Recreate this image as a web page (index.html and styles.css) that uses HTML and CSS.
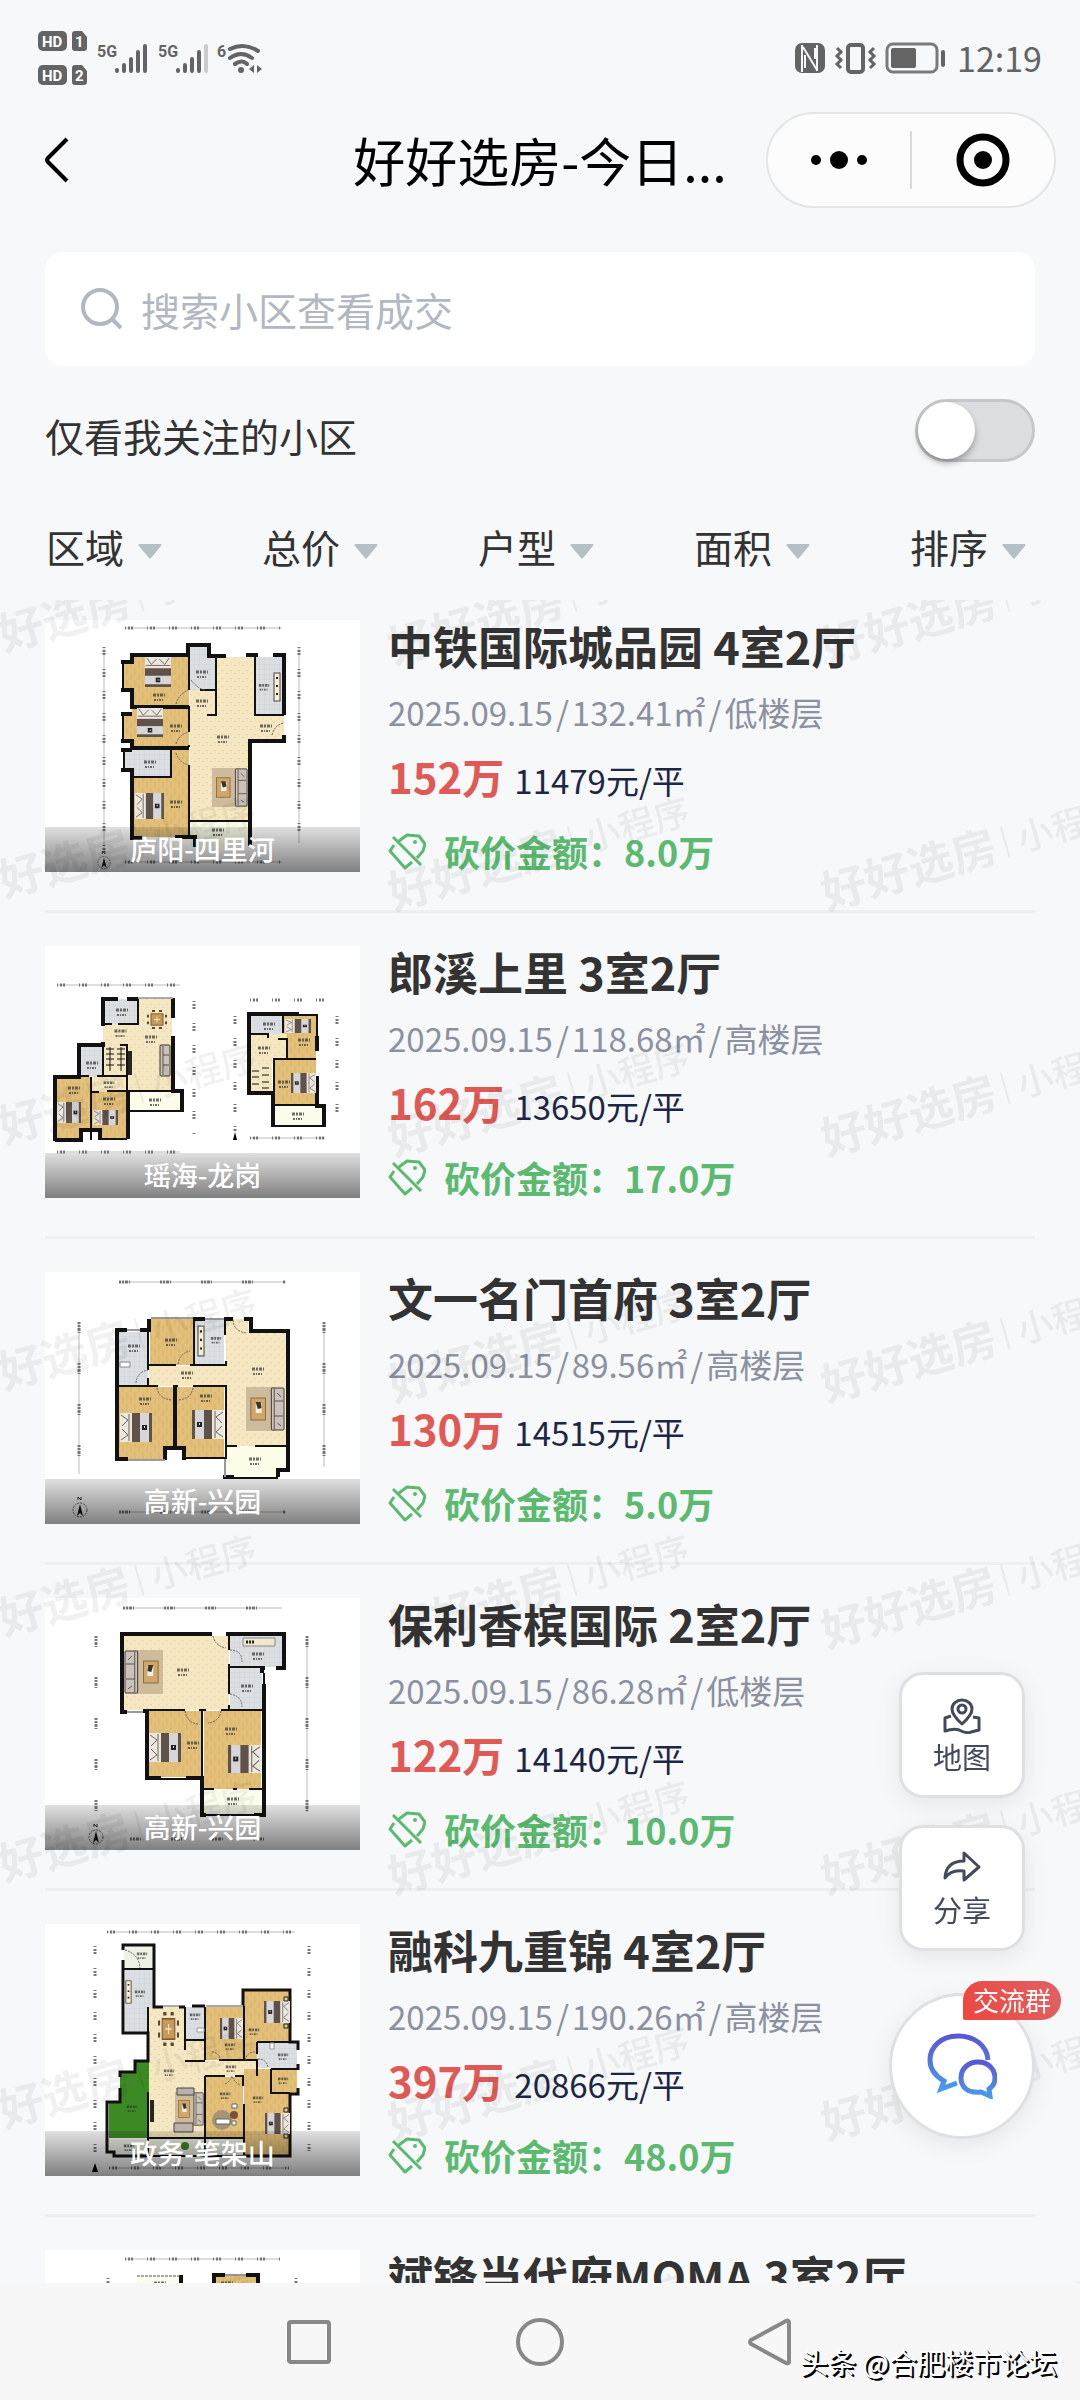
FILE: index.html
```html
<!DOCTYPE html>
<html lang="zh-CN">
<head>
  <meta charset="UTF-8">
  <title>好好选房</title>
  <meta name="viewport" content="width=device-width, initial-scale=1">
  <link rel="stylesheet" href="styles.css">
</head>
<body>
  <!-- shared shapes -->
  <svg class="sprite" aria-hidden="true">
    <defs>
      <pattern id="wood" width="8" height="12" patternUnits="userSpaceOnUse">
        <rect width="8" height="12" fill="#e3c07a"/>
        <path d="M2 0v7M6 5v7" stroke="#d8b26a" stroke-width="1"/>
      </pattern>
      <pattern id="stone" width="8" height="8" patternUnits="userSpaceOnUse">
        <rect width="8" height="8" fill="#f5e7c2"/>
        <path d="M1 2l2 1M5 6l2-1" stroke="#ead6a4" stroke-width="1"/>
      </pattern>
      <pattern id="tile" width="5" height="5" patternUnits="userSpaceOnUse">
        <rect width="5" height="5" fill="#dcdfe2"/>
        <path d="M0 5h5V0" fill="none" stroke="#d0d4d8" stroke-width="1"/>
      </pattern>
      <linearGradient id="chatFill" x1="0" y1="0" x2="0" y2="1">
        <stop offset="0" stop-color="#5b56d6"/>
        <stop offset="1" stop-color="#4a9be8"/>
      </linearGradient>
    </defs>
    <symbol id="bed" viewBox="0 0 32 29" preserveAspectRatio="none">
      <rect width="32" height="29" fill="#5f5249"/>
      <rect width="12" height="29" fill="#ece8e0"/>
      <path d="M1 2l7 5-6 6M1 27l7-5-6-6M9 1v27" fill="none" stroke="#6b625a" stroke-width="1"/>
      <rect x="20" width="9" height="29" fill="#d6d6d8"/>
      <rect x="22" y="12" width="5" height="5" fill="#222"/>
      <rect x="24" y="13" width="1" height="2" fill="#ddd"/>
    </symbol>
    <symbol id="lounge" viewBox="0 0 40 44" preserveAspectRatio="none">
      <rect width="30" height="44" fill="#cdbb9c"/>
      <rect x="5" y="11" width="15" height="22" fill="#cfa768" stroke="#8d6c3c"/>
      <path d="M10 16h6v10h-6z" fill="#f3eee4"/>
      <path d="M10 15h5l1 6-4 1z" fill="#3a322c"/>
      <rect x="26" y="1" width="13" height="42" rx="1" fill="#cbc2bb" stroke="#3d3733"/>
      <path d="M29 2v40M29 14h9M29 29h9M32 6l4 4M32 36l4 3" stroke="#5a524d" fill="none"/>
    </symbol>
    <symbol id="stove" viewBox="0 0 8 30" preserveAspectRatio="none">
      <rect x="1" y="1" width="6" height="28" fill="#f6efd2" stroke="#444"/>
      <path d="M3 6h2M3 14h2M3 22h2" stroke="#222" stroke-width="2"/>
    </symbol>
    <symbol id="diner" viewBox="0 0 20 20" preserveAspectRatio="none">
      <path d="M5 1h3M12 1h3M5 19h3M12 19h3M1 5v3M1 12v3M19 5v3M19 12v3" stroke="#5a4632" stroke-width="2"/>
      <rect x="4" y="4" width="12" height="12" fill="#c79a5a" stroke="#7b5c35"/>
      <path d="M7 10h6M10 7v6" stroke="#f3e7c7"/>
    </symbol>
    <symbol id="label" viewBox="0 0 14 9">
      <path d="M1 2h12" stroke="#333" stroke-width="3" stroke-dasharray="3 1 2 1" opacity=".7"/>
      <path d="M2 7h9" stroke="#333" stroke-width="2" stroke-dasharray="2 1 1 1" opacity=".7"/>
    </symbol>
    <symbol id="north" viewBox="0 0 16 22">
      <path d="M6 4V1l3 3V1" fill="none" stroke="#333"/>
      <circle cx="8" cy="14" r="7" fill="none" stroke="#666" stroke-width="1" stroke-dasharray="2 1"/>
      <path d="M8 8l3 12-3-3-3 3z" fill="#111"/>
    </symbol>
    <symbol id="tag" viewBox="0 0 38 38">
      <path d="M5 5l28 28M11 9l8-6 12 1 6 8-2 7-6 7M6 13l-4 6 15 17 7-6" fill="none" stroke="currentColor" stroke-width="3" stroke-linejoin="round"/>
      <circle cx="27" cy="10" r="2" fill="currentColor"/>
    </symbol>
    <symbol id="caret" viewBox="0 0 24 15">
      <path d="M1 0h22q1 1 0 2L13 14q-1 1-2 0L1 2q-1-1 0-2z" fill="#b4bfc6"/>
    </symbol>
  </svg>

  <div class="status-bar">
    <svg width="225" height="54" viewBox="0 0 225 54" fill="#646464">
      <rect width="29" height="20" rx="5"/>
      <path d="M37 0h7l5 6v11q0 3-3 3h-9q-3 0-3-3V3q0-3 3-3z"/>
      <rect y="34" width="29" height="20" rx="5"/>
      <path d="M37 34h7l5 6v11q0 3-3 3h-9q-3 0-3-3V37q0-3 3-3z"/>
      <g class="status-tag">
        <text x="4" y="16">HD</text><text x="37" y="16">1</text>
        <text x="4" y="50">HD</text><text x="37" y="50">2</text>
      </g>
      <g class="status-net">
        <text x="59" y="26">5G</text><text x="120" y="26">5G</text><text x="179" y="26">6</text>
      </g>
      <g stroke="#646464" stroke-width="4" stroke-linecap="round" fill="none">
        <path d="M79 39v1M86 34v6M93 28v12M100 21v19M107 15v25"/>
        <path d="M140 39v1M147 34v6M154 28v12M161 21v19"/>
        <path d="M168 15v25" stroke="#cbcbcb"/>
        <path d="M192 18q14-7 28 2M192 27q11-8 22 0M197 33q7-5 12 0" stroke-width="4"/>
      </g>
      <circle cx="203" cy="39" r="3"/>
      <path d="M216 34v8l-5-4zM219 34v8l5-4z"/>
    </svg>
    <div class="status-right">
      <svg width="150" height="32" viewBox="0 0 150 32">
        <rect y="1" width="30" height="30" rx="7" fill="#646464"/>
        <path d="M7 3v27M8 5l14 23M22 29V3M10 13v13M20 6v11" stroke="#f7f8fa" stroke-width="2" fill="none"/>
        <rect x="53" y="3" width="15" height="27" rx="3" fill="none" stroke="#646464" stroke-width="4"/>
        <path d="M42 6l4 4-4 4 4 4-4 4 4 4M79 6l-4 4 4 4-4 4 4 4-4 4" fill="none" stroke="#646464" stroke-width="3"/>
        <rect x="92" y="2" width="50" height="28" rx="6" fill="none" stroke="#7a7a7a" stroke-width="3"/>
        <rect x="96" y="6" width="25" height="20" rx="2" fill="#646464"/>
        <rect x="146" y="8" width="4" height="17" rx="2" fill="#646464"/>
      </svg>
      <span class="clock">12:19</span>
    </div>
  </div>

  <header class="nav-bar">
    <button class="back" aria-label="返回">
      <svg width="24" height="46" viewBox="0 0 24 46"><path d="M22 2L3 21q-2 2 0 4l19 19" fill="none" stroke="#000" stroke-width="4"/></svg>
    </button>
    <h1>好好选房-今日...</h1>
    <div class="capsule">
      <button aria-label="更多">
        <svg width="58" height="20" viewBox="0 0 58 20"><circle cx="6" cy="10" r="5"/><circle cx="29" cy="10" r="9"/><circle cx="52" cy="10" r="5"/></svg>
      </button>
      <button aria-label="关闭">
        <svg width="54" height="54" viewBox="0 0 54 54"><circle cx="27" cy="27" r="23" fill="none" stroke="#000" stroke-width="7"/><circle cx="27" cy="27" r="9"/></svg>
      </button>
    </div>
  </header>

  <section class="tools">
    <label class="search">
      <svg width="42" height="42" viewBox="0 0 42 42"><circle cx="19" cy="19" r="17" fill="none" stroke="#b2b8c1" stroke-width="4"/><path d="M32 32l8 8" stroke="#b2b8c1" stroke-width="4"/></svg>
      <input type="text" placeholder="搜索小区查看成交">
    </label>
    <div class="follow">
      <label for="follow-only">仅看我关注的小区</label>
      <input type="checkbox" id="follow-only" class="switch">
    </div>
  </section>

  <div class="filters">
    <div class="filter"><select aria-label="区域"><option>区域</option></select><svg><use href="#caret"/></svg></div>
    <div class="filter"><select aria-label="总价"><option>总价</option></select><svg><use href="#caret"/></svg></div>
    <div class="filter"><select aria-label="户型"><option>户型</option></select><svg><use href="#caret"/></svg></div>
    <div class="filter"><select aria-label="面积"><option>面积</option></select><svg><use href="#caret"/></svg></div>
    <div class="filter"><select aria-label="排序"><option>排序</option></select><svg><use href="#caret"/></svg></div>
  </div>

  <main class="list-area">
    <ul class="list">
      <li class="house">
        <div class="photo">
          <svg viewBox="0 0 315 252">
            <g fill="url(#wood)">
              <path d="M87 37h57v50H87V70h-9V42h9zM87 87h57v40H87v-6h-9V93h9zM126 129h18v88H89v-60h37z"/>
            </g>
            <path d="M171 37h39v58h29v25h-36v80h-58V70h26z" fill="url(#stone)"/>
            <path d="M145 26h19v11h7v33h-26zM210 37h29v58h-29zM87 129h39v28H87v-7h-8v-19h8z" fill="url(#tile)"/>
            <path d="M145 202h58v24h-58z" fill="#f9fbe6"/>
            <g fill="none" stroke="#111" stroke-width="4">
              <path d="M76 42h11v-7h56V25h21v11h17M201 35h12M228 35h11v60M239 115v6h-34v105M76 70h11v17h57M76 94h11M76 121h11v7h57M76 130h11M76 150h11v8v60h10M130 217h20v10"/>
            </g>
            <g fill="none" stroke="#111" stroke-width="2">
              <path d="M144 35v35M144 86v26M144 125v2M126 128v29H88M144 145v72M171 37v58h-9M155 70h16M210 37v58h29M145 201h58M78 42v28M78 93v28M79 131v19"/>
            </g>
            <g fill="none" stroke="#666" stroke-width="1" stroke-dasharray="2 1">
              <path d="M131 84q2-9 12-14M131 124q3-9 12-12M131 133q3 9 12 12M227 115q2-9 11-12M146 60q7 9 14 10"/>
            </g>
            <g transform="translate(126 37) rotate(90)"><use href="#bed" width="30" height="26"/></g>
            <g transform="translate(118 88) rotate(90)"><use href="#bed" width="29" height="26"/></g>
            <use href="#bed" x="90" y="173" width="29" height="26"/>
            <use href="#lounge" x="167" y="148" width="36" height="39"/>
            <use href="#stove" x="228" y="52" width="8" height="30"/>
            <use href="#label" x="107" y="73" width="14" height="9"/>
            <use href="#label" x="124" y="104" width="14" height="9"/>
            <use href="#label" x="124" y="180" width="14" height="9"/>
            <use href="#label" x="149" y="50" width="16" height="9"/>
            <use href="#label" x="150" y="79" width="14" height="9"/>
            <use href="#label" x="171" y="115" width="14" height="9"/>
            <use href="#label" x="213" y="63" width="12" height="9"/>
            <use href="#label" x="214" y="104" width="14" height="9"/>
            <use href="#label" x="98" y="140" width="14" height="9"/>
            <use href="#label" x="166" y="208" width="14" height="9"/>
            <path class="ruler" d="M80 8h157M59 27v205M254 27v196M80 242h157"/>
            <path class="figures" d="M80 8h157M59 27v205M254 27v196M80 242h157"/>
            <use href="#north" x="52" y="230" width="14" height="20"/>
          </svg>
          <span class="area">庐阳-四里河</span>
        </div>
        <div class="info">
          <h2>中铁国际城品园 4室2厅</h2>
          <p class="meta">2025.09.15<i>/</i>132.41㎡<i>/</i>低楼层</p>
          <p class="price"><b>152万</b><span>11479元/平</span></p>
          <p class="cut"><svg><use href="#tag"/></svg>砍价金额：8.0万</p>
        </div>
      </li>

      <li class="house">
        <div class="photo">
          <svg viewBox="0 0 315 252">
            <path d="M58 53h69v92H82v1H47v-16h11z" fill="url(#stone)"/>
            <path d="M11 131h35v15h36v47H55v-9H36v10H11zM239 69h32v44h-32zM229 114h42v45h-42z" fill="url(#wood)"/>
            <path d="M59 54h34v24H59zM34 98h24v32H34zM205 69h33v19h-33z" fill="url(#tile)"/>
            <path d="M205 88h37v25h-15v33h-22z" fill="url(#stone)"/>
            <path d="M83 146h54v19H83zM228 161h51v19h-51z" fill="#fbfdea"/>
            <g fill="none" stroke="#111" stroke-width="4">
              <path d="M73 53H58v27M58 96v3H34v32H10v64M82 53h11M128 52v20M128 90v55h9v21M10 194h26v-10h19v10M83 145v48M220 68h-16v79h24v34M204 68h50M272 90v15M272 130v30h7v21"/>
            </g>
            <g fill="none" stroke="#111" stroke-width="2">
              <path d="M93 53v25H73M58 78h9M58 98v32M34 130h10M52 130h30V99H75M46 131v63M46 146h8M62 145h65M82 99v46M83 165h54M11 194h25M55 193h27M238 69v18M205 88h18v4M233 93h9v20M228 113h43M229 113v46h42M205 146h22M228 180h51M254 69h18v21"/>
              <path d="M61 103h8M61 108h8M61 113h8M61 119h8M72 103h8M72 108h8M72 113h8M72 119h8M65 101v24M76 101v24M207 125h7M207 131h7M207 138h7M217 122h7M217 129h7M217 136h7M217 142h7" stroke-width="1"/>
            </g>
            <path d="M93 52h35" stroke="#aaa" stroke-width="2"/>
            <path d="M83 105h4v24h-4z" fill="#2a2522"/>
            <g transform="translate(125 99)"><rect x="-10" width="10" height="31" rx="1" fill="#cbc2bb" stroke="#3d3733"/><path d="M-7 1v29M-7 10h6M-7 20h6" stroke="#5a524d"/></g>
            <use href="#diner" x="102" y="64" width="20" height="19"/>
            <use href="#bed" x="12" y="156" width="24" height="21"/>
            <use href="#bed" x="48" y="164" width="25" height="15"/>
            <use href="#bed" x="240" y="73" width="26" height="14"/>
            <g transform="translate(271 127) scale(-1 1)"><use href="#bed" width="25" height="20"/></g>
            <use href="#label" x="70" y="62" width="14" height="9"/>
            <use href="#label" x="68" y="83" width="15" height="9"/>
            <use href="#label" x="99" y="89" width="14" height="9"/>
            <use href="#label" x="40" y="115" width="14" height="9"/>
            <use href="#label" x="22" y="140" width="14" height="9"/>
            <use href="#label" x="57" y="135" width="14" height="8"/>
            <use href="#label" x="57" y="151" width="14" height="9"/>
            <use href="#label" x="103" y="152" width="14" height="9"/>
            <use href="#label" x="217" y="76" width="14" height="9"/>
            <use href="#label" x="212" y="100" width="14" height="9"/>
            <use href="#label" x="252" y="92" width="14" height="9"/>
            <use href="#label" x="232" y="134" width="14" height="9"/>
            <use href="#label" x="246" y="166" width="14" height="9"/>
            <path class="ruler" d="M12 39h123M12 206h123M205 192h75"/>
            <path class="figures" d="M12 39h123M12 206h123M205 192h75M149 55v135M205 54h75M190 70v115M292 70v110"/>
            <path d="M190 186l2 8h-4z"/>
          </svg>
          <span class="area">瑶海-龙岗</span>
        </div>
        <div class="info">
          <h2>郎溪上里 3室2厅</h2>
          <p class="meta">2025.09.15<i>/</i>118.68㎡<i>/</i>高楼层</p>
          <p class="price"><b>162万</b><span>13650元/平</span></p>
          <p class="cut"><svg><use href="#tag"/></svg>砍价金额：17.0万</p>
        </div>
      </li>

      <li class="house">
        <div class="photo">
          <svg viewBox="0 0 315 252">
            <path d="M180 47h23v14h38v113h-60v-60h-77V94h77z" fill="url(#stone)"/>
            <path d="M105 47h44v46h-44zM74 115h55v60h-10v12H74zM131 115h48v72h-40v-12h-8z" fill="url(#wood)"/>
            <path d="M74 60h29v54H74zM150 47h29v46h-29z" fill="url(#tile)"/>
            <path d="M181 175h60v20h-9v10h-51z" fill="#fcfee9"/>
            <g fill="none" stroke="#111" stroke-width="4">
              <path d="M82 58H72v129h11M95 58h9V47M148 47h12M179 47h9M199 47h7v12h37v139h-10v7M120 188v-12h19v12M178 205h11M130 115v60"/>
            </g>
            <g fill="none" stroke="#111" stroke-width="2">
              <path d="M103 60v38M103 114H74M104 93h27M145 93h36v-4M149 47v46M180 47v16M103 106v8h10M128 114h5M148 114h33v72h-41M181 174h11M210 174h31M182 206h51"/>
            </g>
            <path d="M106 46h42M82 58h13M160 47h19M83 188h37M180 187v18" stroke="#999" stroke-width="2"/>
            <g fill="none" stroke="#666" stroke-width="1" stroke-dasharray="2 1">
              <path d="M133 92q2-11 12-13M91 111q1-11 12-13M112 116q2 11 15 12M148 116q-2 11-15 12M188 48q1 12 14 13"/>
            </g>
            <use href="#bed" x="75" y="141" width="32" height="29"/>
            <g transform="translate(179 138) scale(-1 1)"><use href="#bed" width="32" height="29"/></g>
            <use href="#lounge" x="201" y="115" width="39" height="44"/>
            <use href="#stove" x="152" y="53" width="8" height="32"/>
            <path d="M75 90h10v5H75z" fill="#fff" stroke="#888"/>
            <use href="#label" x="82" y="72" width="14" height="9"/>
            <use href="#label" x="119" y="66" width="14" height="9"/>
            <use href="#label" x="165" y="64" width="12" height="9"/>
            <use href="#label" x="206" y="95" width="14" height="9"/>
            <use href="#label" x="135" y="99" width="14" height="9"/>
            <use href="#label" x="93" y="125" width="14" height="9"/>
            <use href="#label" x="154" y="122" width="14" height="9"/>
            <use href="#label" x="203" y="185" width="14" height="9"/>
            <path class="ruler" d="M74 10h167M34 50v152M279 50v145M74 240h167"/>
            <path class="figures wide" d="M74 10h167M34 50v152M279 50v145M74 240h167"/>
            <use href="#north" x="27" y="224" width="16" height="22"/>
          </svg>
          <span class="area">高新-兴园</span>
        </div>
        <div class="info">
          <h2>文一名门首府 3室2厅</h2>
          <p class="meta">2025.09.15<i>/</i>89.56㎡<i>/</i>高楼层</p>
          <p class="price"><b>130万</b><span>14515元/平</span></p>
          <p class="cut"><svg><use href="#tag"/></svg>砍价金额：5.0万</p>
        </div>
      </li>

      <li class="house">
        <div class="photo">
          <svg viewBox="0 0 315 252">
            <path d="M79 38h105v74H79z" fill="url(#stone)"/>
            <path d="M104 113h53v66h-53zM159 113h57v78h-57z" fill="url(#wood)"/>
            <path d="M185 38h52v31h-20v42h-32z" fill="url(#tile)"/>
            <path d="M159 192h58v24h-58z" fill="#fbfdec"/>
            <g fill="none" stroke="#111" stroke-width="4">
              <path d="M167 36H77v78h5M181 36h58v34h-8M220 70h-3v5M219 86v131h-10M98 113h4v67h14M141 180h16v37h4"/>
            </g>
            <g fill="none" stroke="#111" stroke-width="2">
              <path d="M184 38v14M184 66v30M184 107v5M185 69h35M104 112h36M154 112h7M176 112h41M157 113v66M159 191h10M188 191h4M204 191h13M160 217h50M116 181h25M219 75v11"/>
            </g>
            <path d="M82 114h16" stroke="#999" stroke-width="2"/>
            <g fill="none" stroke="#666" stroke-width="1" stroke-dasharray="2 1">
              <path d="M168 38q2 10 13 12M185 52q12 0 12 12M185 96q12 2 12 13M140 113q2 12 13 13M176 113q-2 11-13 12"/>
            </g>
            <g transform="translate(118 52) scale(-1 1)"><use href="#lounge" width="39" height="44"/></g>
            <use href="#bed" x="104" y="135" width="32" height="29"/>
            <g transform="translate(216 147) scale(-1 1)"><use href="#bed" width="33" height="28"/></g>
            <path d="M198 40h32v8h-32z" fill="#eee8d0" stroke="#888"/>
            <path d="M201 44h8" stroke="#222" stroke-width="3" stroke-dasharray="2 1"/>
            <use href="#label" x="131" y="70" width="14" height="9"/>
            <use href="#label" x="206" y="54" width="14" height="9"/>
            <use href="#label" x="195" y="86" width="14" height="9"/>
            <use href="#label" x="141" y="143" width="14" height="9"/>
            <use href="#label" x="179" y="129" width="14" height="9"/>
            <use href="#label" x="181" y="199" width="14" height="9"/>
            <path class="ruler" d="M78 10h159M262 38v176"/>
            <path class="figures wide" d="M78 10h159M51 38v176M262 38v176M85 241h152"/>
            <use href="#north" x="43" y="225" width="16" height="22"/>
          </svg>
          <span class="area">高新-兴园</span>
        </div>
        <div class="info">
          <h2>保利香槟国际 2室2厅</h2>
          <p class="meta">2025.09.15<i>/</i>86.28㎡<i>/</i>低楼层</p>
          <p class="price"><b>122万</b><span>14140元/平</span></p>
          <p class="cut"><svg><use href="#tag"/></svg>砍价金额：10.0万</p>
        </div>
      </li>

      <li class="house">
        <div class="photo">
          <svg viewBox="0 0 315 252">
            <path d="M104 83h36v34h20v20h51v15h-51v61h-56z" fill="url(#stone)"/>
            <path d="M161 82h38v54h-38zM199 67h46v50h-33v20h-13zM161 153h37v60h-37zM199 145h27v25h19v62h-46zM226 145h26v24h-26z" fill="url(#wood)"/>
            <path d="M80 46h29v37h-5v25H80zM141 83h19v33h-19zM213 118h39v26h-39z" fill="url(#tile)"/>
            <path d="M90 137h14v77H64v-36h11v-30h15z" fill="#3c8a24"/>
            <path d="M79 22h29v23H79zM64 215h96v17H64zM161 215h37v17h-37z" fill="#eef1e6"/>
            <g fill="none" stroke="#111" stroke-width="3">
              <path d="M78 26v-5h31v62h9M78 36v73h25v28H90v11H75v5M75 164v14H62v50h7v4h35M134 83h6M147 82h13M198 82V66h47v52h8v8M253 140v6M253 164v6h-8v62h-46"/>
            </g>
            <g fill="none" stroke="#111" stroke-width="2">
              <path d="M79 45h29M103 83v54M103 168v64M140 83v43M140 116h20M160 83v53M199 82v54M140 137h20M174 136h38v16M212 118h34M212 118v12M226 145h27M226 145v24h19M160 152h20M190 152h8v10M199 180v52M160 152v80M104 214h94M104 232h94"/>
            </g>
            <path d="M161 82h37M118 82h16" stroke="#aaa" stroke-width="2"/>
            <g fill="none" stroke="#666" stroke-width="1" stroke-dasharray="2 1">
              <path d="M80 26q14 4 15 18M167 128q6 0 9 8M210 128q-8 0-10 8M213 135q9 0 10 9M180 160q5-2 7-8q2 6 8 9M77 150q8 4 8 12"/>
            </g>
            <g transform="translate(245 77) scale(-1 1)"><use href="#bed" width="26" height="22"/></g>
            <g transform="translate(198 94) scale(-1 1)"><use href="#bed" width="23" height="21"/></g>
            <g transform="translate(245 189) scale(-1 1)"><use href="#bed" width="25" height="21"/></g>
            <path d="M239 73h4v4h-4zM239 100h4v4h-4zM239 184h4v4h-4zM239 210h4v4h-4z" fill="#e8cf92" stroke="#222"/>
            <use href="#lounge" x="130" y="168" width="29" height="34"/>
            <path d="M132 164h17v7h-17zM129 199h19v9h-19z" fill="#b9b1ab" stroke="#4a443f"/>
            <use href="#diner" x="113" y="88" width="21" height="34"/>
            <use href="#stove" x="80" y="56" width="7" height="24"/>
            <circle cx="177" cy="196" r="10" fill="#a39577"/>
            <path d="M171 195h14v5h-14zM187 180h5v4h-5zM187 197h4v4h-4z" fill="#fff" stroke="#666"/>
            <circle cx="189" cy="191" r="4" fill="#7c4f3a"/>
            <path d="M105 176h4v22h-4z" fill="#2a2522"/>
            <path d="M152 104h7v4h-7zM225 119h4v6h-4z" fill="#fff" stroke="#999"/>
            <circle cx="140" cy="222" r="4" fill="#3c8a24"/>
            <use href="#label" x="91" y="28" width="12" height="8"/>
            <use href="#label" x="89" y="66" width="12" height="8"/>
            <use href="#label" x="144" y="89" width="12" height="8"/>
            <use href="#label" x="179" y="119" width="12" height="8"/>
            <use href="#label" x="203" y="104" width="12" height="8"/>
            <use href="#label" x="232" y="129" width="12" height="8"/>
            <use href="#label" x="180" y="141" width="12" height="8"/>
            <use href="#label" x="232" y="153" width="12" height="8"/>
            <use href="#label" x="118" y="145" width="12" height="8"/>
            <use href="#label" x="174" y="168" width="12" height="8"/>
            <use href="#label" x="207" y="172" width="12" height="8"/>
            <use href="#label" x="80" y="181" width="14" height="8"/>
            <use href="#label" x="78" y="220" width="12" height="8"/>
            <path class="ruler" d="M62 8h188M64 244h180"/>
            <path class="figures" d="M62 8h188M50 22v210M264 22v205M64 244h180"/>
            <path d="M50 239l3 9h-6z"/>
          </svg>
          <span class="area">政务-笔架山</span>
        </div>
        <div class="info">
          <h2>融科九重锦 4室2厅</h2>
          <p class="meta">2025.09.15<i>/</i>190.26㎡<i>/</i>高楼层</p>
          <p class="price"><b>397万</b><span>20866元/平</span></p>
          <p class="cut"><svg><use href="#tag"/></svg>砍价金额：48.0万</p>
        </div>
      </li>

      <li class="house">
        <div class="photo">
          <svg viewBox="0 0 315 252">
            <path d="M92 26h44v40H92z" fill="#fbfdec"/>
            <path d="M168 26h46v40h-46z" fill="url(#wood)"/>
            <path d="M136 25v20M180 25h-11v20M201 25h12v20" fill="none" stroke="#111" stroke-width="4"/>
            <path d="M92 26h44" stroke="#555" stroke-width="1" stroke-dasharray="3 1"/>
            <path d="M180 25h21" stroke="#999" stroke-width="2"/>
            <use href="#label" x="104" y="31" width="22" height="9"/>
            <use href="#label" x="174" y="31" width="16" height="9"/>
            <path class="ruler" d="M80 9h155"/>
            <path class="figures" d="M80 9h155M63 28v190M251 28v190"/>
          </svg>
        </div>
        <div class="info">
          <h2>斌锋当代府MOMA 3室2厅</h2>
        </div>
      </li>
    </ul>

    <svg class="watermark" aria-hidden="true">
      <defs>
        <pattern id="mark" x="-83" y="-66" width="433" height="246" patternUnits="userSpaceOnUse">
          <g transform="translate(44 130) rotate(-16)">
            <text class="mark-name" x="0" y="0">好好选房</text>
            <path d="M190 -32v32" stroke="#000" stroke-width="2"/>
            <text class="mark-kind" x="203" y="-2">小程序</text>
          </g>
        </pattern>
      </defs>
      <rect width="100%" height="100%" fill="url(#mark)"/>
    </svg>
  </main>

  <aside class="float-tools">
    <button class="tile-btn">
      <svg width="38" height="36" viewBox="0 0 38 36" fill="none" stroke="#434a5c" stroke-width="3" stroke-linejoin="round">
        <path d="M19 26Q9 17 9 11a10 9 0 0 1 20 0q0 6-10 15z"/>
        <circle cx="19" cy="11" r="4"/>
        <path d="M8 18l-6 2v13q9-3 14-1 8 4 12 2l8-2V20l-6-1"/>
      </svg>
      地图
    </button>
    <button class="tile-btn">
      <svg width="38" height="36" viewBox="0 0 38 36" fill="none" stroke="#434a5c" stroke-width="3" stroke-linejoin="round">
        <path d="M21 2l15 14-15 13v-9Q8 18 2 27 3 10 21 10z"/>
      </svg>
      分享
    </button>
    <button class="chat-btn" aria-label="交流群">
      <svg width="70" height="66" viewBox="0 0 70 66">
        <path d="M61 27C60 12 47 3 31 3 14 3 3 14 3 27q0 13 14 21l-3 8 16-6" fill="none" stroke="url(#chatFill)" stroke-width="5"/>
        <path d="M51 29c10 0 17 7 17 16q0 7-6 11l1 7-9-4c-13 2-20-5-20-14 0-9 7-16 17-16z" fill="#fff" stroke="url(#chatFill)" stroke-width="5"/>
      </svg>
      <span class="badge">交流群</span>
    </button>
  </aside>

  <footer class="system-nav">
    <button aria-label="最近任务"><svg width="50" height="50" viewBox="0 0 50 50"><rect x="5" y="5" width="40" height="40" rx="2"/></svg></button>
    <button aria-label="主页"><svg width="50" height="50" viewBox="0 0 50 50"><circle cx="25" cy="25" r="22"/></svg></button>
    <button aria-label="返回上一级"><svg width="50" height="50" viewBox="0 0 50 50"><path d="M43 5v40q-1 2-3 1L5 27q-2-2 0-4L40 4q2-1 3 1z"/></svg></button>
    <span class="credit">头条 @合肥楼市论坛</span>
  </footer>
</body>
</html>
```
FILE: styles.css
```css
:root {
  --page: #f7f8fa;
  --text: #333;
  --muted: #8a91a0;
  --red: #e05a55;
  --green: #5bba70;
  --navy: #1d2745;
  --slate: #434a5c;
}

* {
  box-sizing: border-box;
}

body {
  margin: 0;
  height: 100vh;
  display: flex;
  flex-direction: column;
  background: var(--page);
  color: var(--text);
  font-family: "Noto Sans CJK SC", "Noto Sans", sans-serif;
  overflow: hidden;
}

h1, h2, p, ul {
  margin: 0;
  padding: 0;
}

button, input, select {
  font-family: inherit;
  color: inherit;
  border: none;
  background: none;
  padding: 0;
  margin: 0;
}

svg {
  display: block;
  flex: none;
}

.sprite {
  position: absolute;
  width: 0;
  height: 0;
}

/* status bar */
.status-bar {
  display: flex;
  justify-content: space-between;
  align-items: center;
  padding: 31px 38px 27px;
}

.status-tag {
  fill: #fff;
  font: bold 15px Roboto, sans-serif;
}

.status-net {
  font: bold 16px Roboto, sans-serif;
}

.status-right {
  display: flex;
  align-items: center;
  gap: 12px;
}

.clock {
  color: #646464;
  font-size: 34px;
  line-height: 40px;
}

/* title bar */
.nav-bar {
  display: grid;
  grid-template-columns: 1fr auto 1fr;
  align-items: center;
  padding: 0 24px;
}

.nav-bar h1 {
  font-size: 52px;
  line-height: 60px;
  font-weight: 400;
  color: #000;
}

.back {
  justify-self: start;
  padding: 0 21px;
}

.capsule {
  justify-self: end;
  display: flex;
  align-items: center;
  width: 290px;
  height: 96px;
  border: 2px solid #e4e5e7;
  border-radius: 48px;
  background: #fcfcfd;
}

.capsule button {
  flex: 1;
  height: 58px;
  display: flex;
  align-items: center;
  justify-content: center;
}

.capsule button + button {
  border-left: 2px solid #d9dadc;
}

/* search + switch */
.tools {
  padding: 44px 45px 0;
}

.search {
  display: flex;
  align-items: center;
  gap: 18px;
  height: 114px;
  padding: 0 36px;
  border-radius: 18px;
  background: #fff;
}

.search input {
  flex: 1;
  min-width: 0;
  font-size: 39px;
  line-height: 58px;
  outline: none;
}

.search input::placeholder {
  color: #b2b8c1;
  opacity: 1;
}

.follow {
  display: flex;
  justify-content: space-between;
  align-items: flex-end;
  padding-top: 33px;
  font-size: 39px;
  line-height: 54px;
}

.switch {
  appearance: none;
  width: 120px;
  height: 63px;
  border: 3px solid #c6c7ca;
  border-radius: 32px;
  background: #dcdde1;
}

.switch::before {
  content: "";
  display: block;
  width: 57px;
  height: 57px;
  border-radius: 50%;
  background: #fff;
  box-shadow: 0 4px 6px rgba(0, 0, 0, 0.3);
}

.switch:checked::before {
  margin-left: auto;
}

/* filters */
.filters {
  display: flex;
  padding: 55px 0 25px;
}

.filter {
  flex: 1;
  display: flex;
  align-items: center;
  justify-content: center;
  padding-right: 8px;
  gap: 13px;
}

.filter select {
  appearance: none;
  font-size: 39px;
  line-height: 58px;
}

.filter svg {
  width: 24px;
  height: 15px;
  margin-top: 10px;
}

/* list */
.list-area {
  position: relative;
  flex: 1;
  min-height: 0;
  overflow: hidden;
}

.list {
  list-style: none;
  padding: 20px 45px 0;
}

.house {
  display: flex;
  align-items: flex-start;
  gap: 28px;
  padding-bottom: 38px;
  margin-bottom: 33px;
  border-bottom: 3px solid #eeeff2;
}

.photo {
  position: relative;
  flex: none;
  width: 315px;
  height: 252px;
  background: #fff;
}

.photo svg {
  width: 100%;
  height: 100%;
}

.ruler {
  fill: none;
  stroke: #bbb;
  stroke-width: 1;
}

.figures {
  fill: none;
  stroke: #777;
  stroke-width: 3;
  stroke-dasharray: 1 2 2 1 2 14;
}

.figures.wide {
  stroke-dasharray: 2 1 2 1 3 1 1 30;
}

.area {
  position: absolute;
  left: 0;
  right: 0;
  bottom: 0;
  padding-bottom: 2px;
  background: linear-gradient(rgba(0, 0, 0, 0.12), rgba(0, 0, 0, 0.5));
  color: #fff;
  font-size: 27px;
  font-weight: 500;
  line-height: 43px;
  text-align: center;
}

.info {
  flex: 1;
  min-width: 0;
}

.info h2 {
  font-size: 45px;
  line-height: 52px;
  font-weight: 700;
}

.meta {
  margin-top: 18px;
  font-size: 33px;
  line-height: 44px;
  color: var(--muted);
}

.meta i {
  font-style: normal;
  margin: 0 3px;
}

.price {
  margin-top: 14px;
  font-size: 33px;
  line-height: 56px;
  color: var(--navy);
}

.price b {
  margin-right: 10px;
  font-size: 42px;
  color: var(--red);
}

.cut {
  display: flex;
  align-items: center;
  gap: 18px;
  margin-top: 24px;
  font-size: 36px;
  line-height: 36px;
  font-weight: 700;
  color: var(--green);
}

.cut svg {
  width: 38px;
  height: 38px;
}

/* repeated mark over the list */
.watermark {
  position: absolute;
  top: 0;
  left: 0;
  width: 100%;
  height: 100%;
  pointer-events: none;
  opacity: 0.05;
}

.mark-name {
  font-size: 45px;
  font-weight: 700;
}

.mark-kind {
  font-size: 36px;
  font-weight: 500;
}

/* floating buttons */
.float-tools {
  position: fixed;
  right: 45px;
  bottom: 261px;
  display: flex;
  flex-direction: column;
  align-items: center;
}

.tile-btn {
  display: flex;
  flex-direction: column;
  align-items: center;
  gap: 2px;
  width: 126px;
  height: 126px;
  margin-bottom: 27px;
  padding-top: 23px;
  border: 3px solid #dfe0e4;
  border-radius: 24px;
  background: #fff;
  box-shadow: 0 6px 24px rgba(0, 0, 0, 0.08);
  color: var(--slate);
  font-size: 29px;
  line-height: 40px;
}

.chat-btn {
  position: relative;
  display: flex;
  align-items: center;
  justify-content: center;
  width: 146px;
  height: 146px;
  margin-top: 15px;
  border: 3px solid #dfe0e4;
  border-radius: 50%;
  background: #fff;
  box-shadow: 0 6px 24px rgba(0, 0, 0, 0.08);
}

.badge {
  position: absolute;
  top: -15px;
  right: -29px;
  padding: 0 10px 2px;
  border-radius: 20px 20px 20px 2px;
  background: linear-gradient(60deg, #ef453f, #de6464);
  color: #fff;
  font-size: 26px;
  line-height: 37px;
  white-space: nowrap;
}

/* system navigation */
.system-nav {
  position: relative;
  display: flex;
  justify-content: center;
  align-items: center;
  gap: 181px;
  height: 117px;
  background: #f7f7f7;
}

.system-nav svg {
  fill: none;
  stroke: #888;
  stroke-width: 4;
}

.credit {
  position: absolute;
  right: 23px;
  bottom: 20px;
  color: #fff;
  font-size: 28px;
  line-height: 36px;
  text-shadow: 1px 1px 0 #000, 2px 2px 0 #000;
}
```
